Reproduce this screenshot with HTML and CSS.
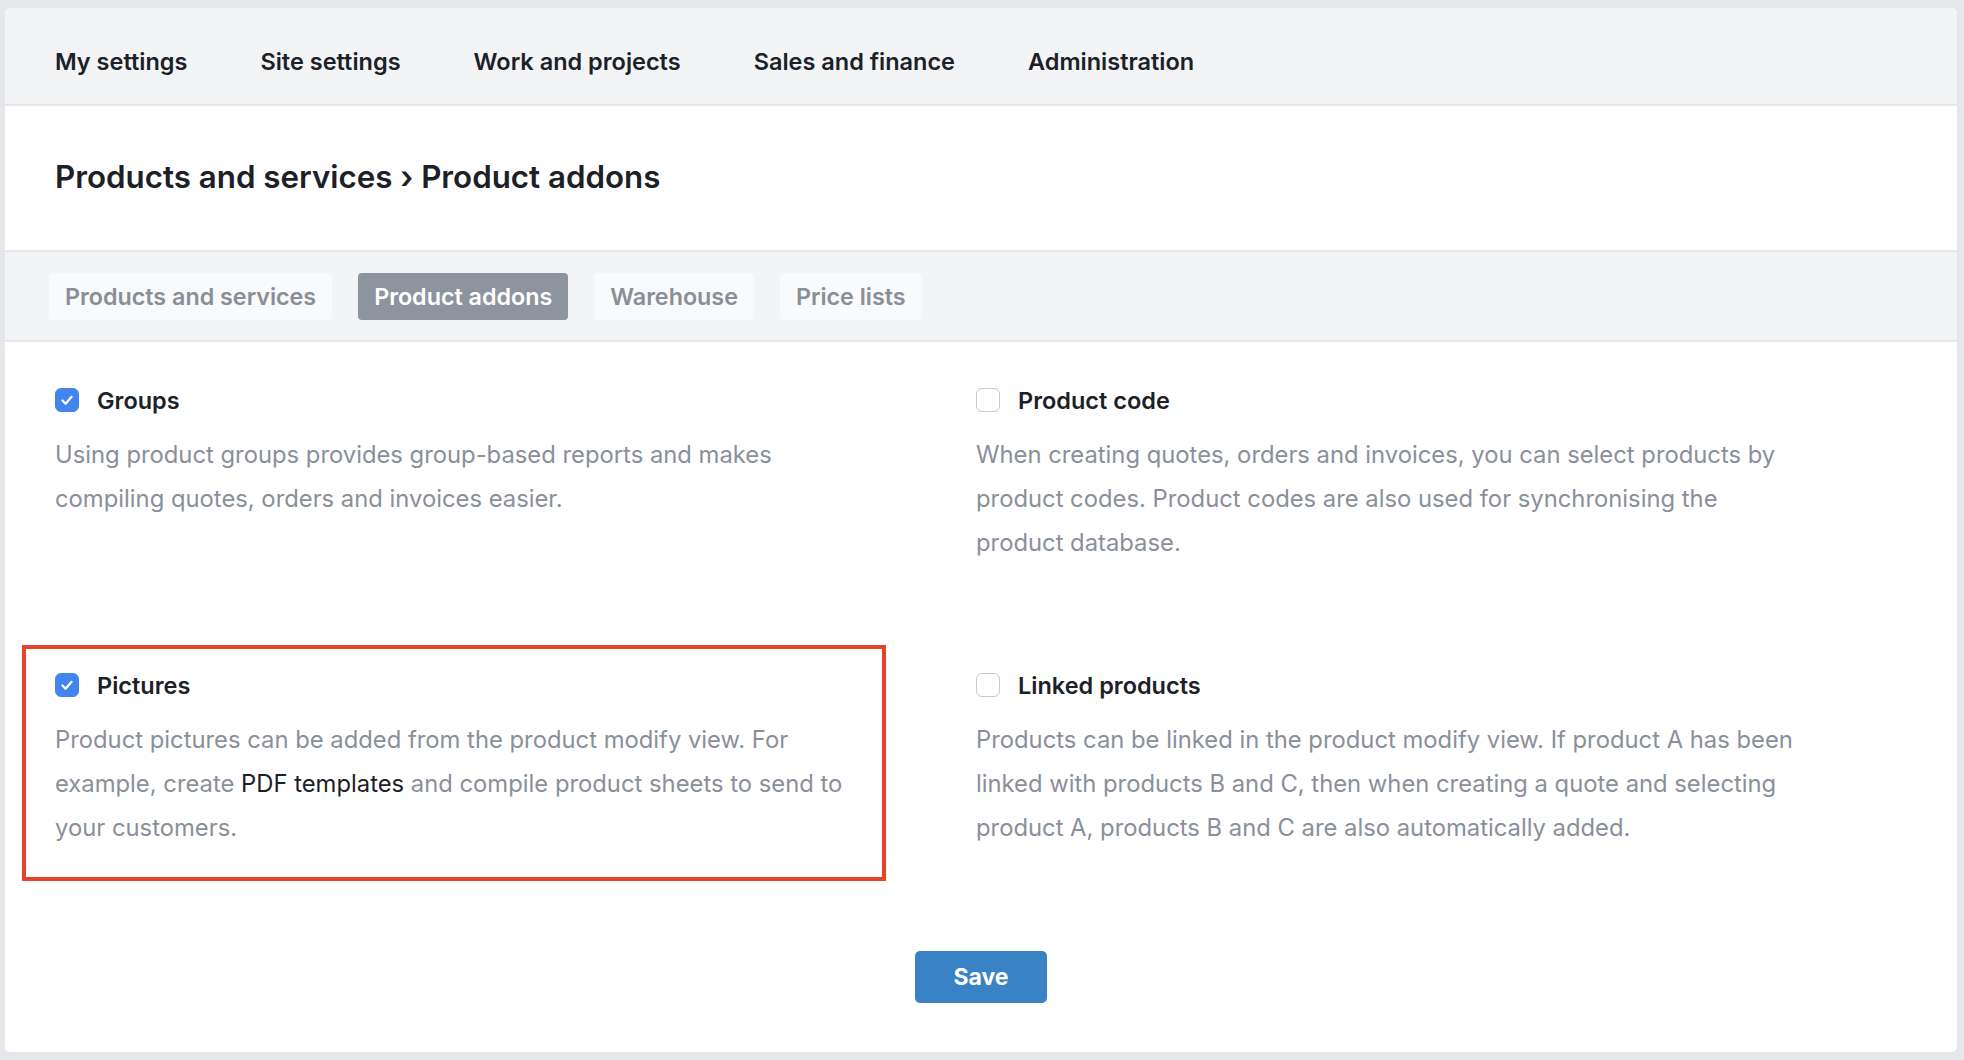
FILE: index.html
```html
<!DOCTYPE html>
<html lang="en">
<head>
  <meta charset="UTF-8">
  <title>Settings - Product addons</title>
  <link rel="stylesheet" href="styles.css">
</head>
<body>
  <div class="card">
    <nav class="topnav">
      <a href="#">My settings</a>
      <a href="#">Site settings</a>
      <a href="#">Work and projects</a>
      <a href="#">Sales and finance</a>
      <a href="#">Administration</a>
    </nav>

    <div class="page-head">
      <h1>Products and services › Product addons</h1>
    </div>

    <div class="tabs">
      <a href="#" class="tab">Products and services</a>
      <a href="#" class="tab active">Product addons</a>
      <a href="#" class="tab">Warehouse</a>
      <a href="#" class="tab">Price lists</a>
    </div>

    <form class="content">
      <div class="options">
        <div class="option">
          <label class="option-title">
            <span class="check checked">
              <svg viewBox="0 0 24 24"><path d="M7 12.5l3.4 3.6L17 8.5"/></svg>
            </span>
            Groups
          </label>
          <p>Using product groups provides group-based reports and makes compiling quotes, orders and invoices easier.</p>
        </div>

        <div class="option">
          <label class="option-title">
            <span class="check"></span>
            Product code
          </label>
          <p>When creating quotes, orders and invoices, you can select products by product codes. Product codes are also used for synchronising the product database.</p>
        </div>

        <div class="option marked">
          <label class="option-title">
            <span class="check checked">
              <svg viewBox="0 0 24 24"><path d="M7 12.5l3.4 3.6L17 8.5"/></svg>
            </span>
            Pictures
          </label>
          <p>Product pictures can be added from the product modify view. For example, create <a href="#">PDF templates</a> and compile product sheets to send to your customers.</p>
        </div>

        <div class="option">
          <label class="option-title">
            <span class="check"></span>
            Linked products
          </label>
          <p>Products can be linked in the product modify view. If product A has been linked with products B and C, then when creating a quote and selecting product A, products B and C are also automatically added.</p>
        </div>
      </div>

      <div class="actions">
        <button type="button" class="save">Save</button>
      </div>
    </form>
  </div>
</body>
</html>
```

FILE: styles.css
```css
body {
  margin: 0;
  padding: 8px 7px 8px 5px;
  background: #e5e7eb;
  font-family: Inter, "Noto Sans", sans-serif;
  color: #1c2128;
}

.card {
  background: #fff;
  border-radius: 5px;
  overflow: hidden;
  height: 1044px;
}

.topnav {
  display: flex;
  gap: 73px;
  height: 86px;
  padding: 10px 50px 0;
  align-items: center;
  background: #f3f4f6;
  border-bottom: 2px solid #e5e7eb;
}

.topnav a {
  color: #1c2128;
  text-decoration: none;
  font-size: 23.5px;
  font-weight: 600;
}

.page-head {
  height: 142px;
  padding: 0 50px 2px;
  display: flex;
  align-items: center;
}

h1 {
  margin: 0;
  font-size: 31.3px;
  font-weight: 600;
}

.tabs {
  display: flex;
  gap: 26px;
  align-items: center;
  height: 88px;
  padding: 0 44px;
  background: #f3f4f6;
  border-top: 2px solid #e5e7eb;
  border-bottom: 2px solid #e5e7eb;
}

.tab {
  padding: 0 16px;
  height: 47px;
  line-height: 47px;
  border-radius: 4px;
  background: #f9fafb;
  color: #8a8f97;
  font-size: 23.3px;
  font-weight: 600;
  text-decoration: none;
}

.tab.active {
  background: #8e949e;
  color: #fff;
}

.content {
  padding: 44px 50px 0;
}

.options {
  display: grid;
  grid-template-columns: 805px 825px;
  column-gap: 116px;
  row-gap: 106px;
}

.option {
  position: relative;
}

.option-title {
  display: flex;
  align-items: center;
  gap: 18px;
  height: 28px;
  font-size: 23.5px;
  font-weight: 600;
  cursor: pointer;
}

.check {
  flex: none;
  width: 24px;
  height: 24px;
  box-sizing: border-box;
  border: 1.5px solid #c6cad0;
  border-radius: 6px;
  background: #fff;
  display: flex;
  align-items: center;
  justify-content: center;
}

.check.checked {
  background: #4285ee;
  border-color: #4285ee;
}

.check svg {
  width: 24px;
  height: 24px;
  fill: none;
  stroke: #fff;
  stroke-width: 2.4;
  stroke-linecap: round;
  stroke-linejoin: round;
}

.option p {
  margin: 19px 0 0;
  font-size: 23.8px;
  line-height: 44px;
  color: #8a909a;
}

.option p a {
  color: #1c2128;
  text-decoration: none;
}

/* annotation frame */
.option.marked::after {
  content: "";
  position: absolute;
  top: -26px;
  left: -33px;
  right: -26px;
  bottom: -31px;
  border: 4px solid #e6432c;
  pointer-events: none;
}

.actions {
  display: flex;
  justify-content: center;
  margin-top: 101px;
}

.save {
  width: 132px;
  height: 52px;
  border: none;
  border-radius: 5px;
  background: #3982c6;
  color: #fff;
  font-family: inherit;
  font-size: 23px;
  font-weight: 700;
  cursor: pointer;
}
```
